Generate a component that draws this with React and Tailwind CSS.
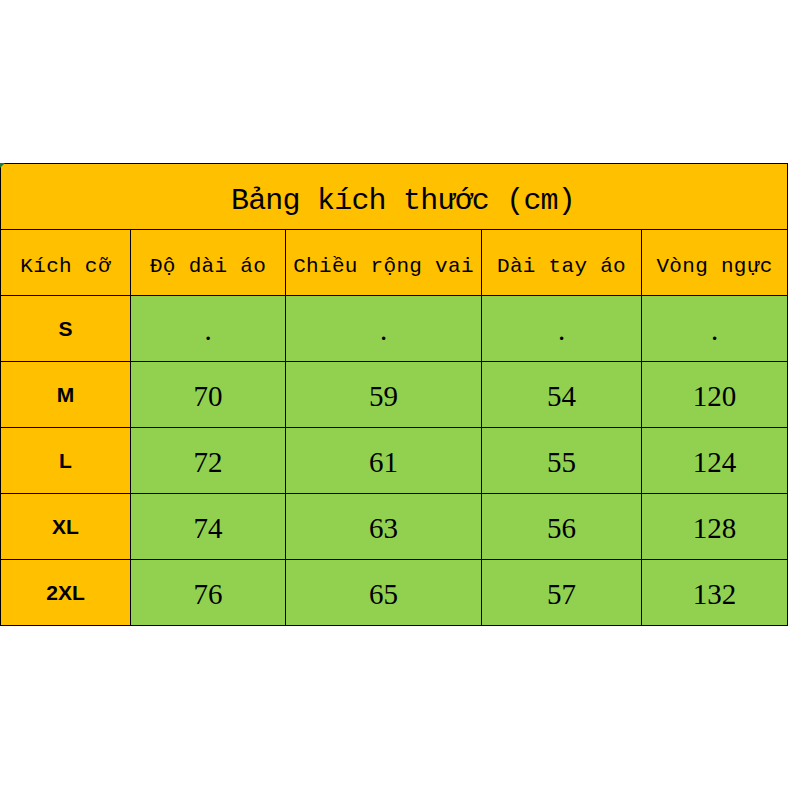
import React from "react";

const headers = ["Kích cỡ", "Độ dài áo", "Chiều rộng vai", "Dài tay áo", "Vòng ngực"];

const rows = [
  ["S", ".", ".", ".", "."],
  ["M", "70", "59", "54", "120"],
  ["L", "72", "61", "55", "124"],
  ["XL", "74", "63", "56", "128"],
  ["2XL", "76", "65", "57", "132"],
];

export default function App() {
  return (
    <div className="w-[788px] h-[788px] bg-white pt-[163px]">
      <div className="relative w-[788px] grid grid-cols-[129px_154px_195px_159px_145px] grid-rows-[repeat(7,65px)] gap-px p-px bg-black">
        <div className="absolute left-0 top-0 w-0 h-0 border-t-[5px] border-r-[5px] border-t-[#1f7a3a] border-r-transparent" />
        <div className="col-span-5 bg-[#FFC000] flex items-center justify-center font-['Liberation_Mono',monospace] text-[30px] tracking-[-0.8px] text-black pt-[9px] pl-[18px] whitespace-pre">
          {"Bảng kích thước (cm)"}
        </div>
        {headers.map((h, i) => (
          <div
            key={i}
            className="bg-[#FFC000] flex items-center justify-center font-['Liberation_Mono',monospace] text-[21px] tracking-[0.3px] text-black pt-[8px] whitespace-pre"
          >
            {h}
          </div>
        ))}
        {rows.map((r, ri) =>
          r.map((c, ci) =>
            ci === 0 ? (
              <div
                key={ri + "-" + ci}
                className="bg-[#FFC000] flex items-center justify-center font-['Liberation_Sans',Arial,sans-serif] text-[21px] font-bold text-black"
              >
                {c}
              </div>
            ) : (
              <div
                key={ri + "-" + ci}
                className="bg-[#92D050] flex items-center justify-center font-['Liberation_Serif',serif] text-[29px] text-black pt-[5px]"
              >
                {c}
              </div>
            )
          )
        )}
      </div>
    </div>
  );
}
